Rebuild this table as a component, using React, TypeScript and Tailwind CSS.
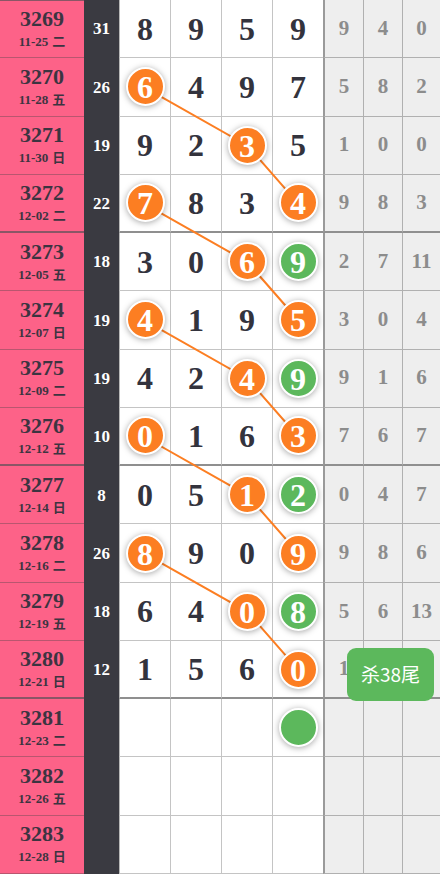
import React from 'react'

type Row = {
  issue: string
  date: string
  week: string
  sum?: string
  digits: string[]
  tails: string[]
  hot?: Record<number, 'o' | 'g'>
}

const rows: Row[] = [
  { issue: '3269', date: '11-25', week: '二', sum: '31', digits: ['8', '9', '5', '9'], tails: ['9', '4', '0'] },
  { issue: '3270', date: '11-28', week: '五', sum: '26', digits: ['6', '4', '9', '7'], tails: ['5', '8', '2'], hot: { 0: 'o' } },
  { issue: '3271', date: '11-30', week: '日', sum: '19', digits: ['9', '2', '3', '5'], tails: ['1', '0', '0'], hot: { 2: 'o' } },
  { issue: '3272', date: '12-02', week: '二', sum: '22', digits: ['7', '8', '3', '4'], tails: ['9', '8', '3'], hot: { 0: 'o', 3: 'o' } },
  { issue: '3273', date: '12-05', week: '五', sum: '18', digits: ['3', '0', '6', '9'], tails: ['2', '7', '11'], hot: { 2: 'o', 3: 'g' } },
  { issue: '3274', date: '12-07', week: '日', sum: '19', digits: ['4', '1', '9', '5'], tails: ['3', '0', '4'], hot: { 0: 'o', 3: 'o' } },
  { issue: '3275', date: '12-09', week: '二', sum: '19', digits: ['4', '2', '4', '9'], tails: ['9', '1', '6'], hot: { 2: 'o', 3: 'g' } },
  { issue: '3276', date: '12-12', week: '五', sum: '10', digits: ['0', '1', '6', '3'], tails: ['7', '6', '7'], hot: { 0: 'o', 3: 'o' } },
  { issue: '3277', date: '12-14', week: '日', sum: '8', digits: ['0', '5', '1', '2'], tails: ['0', '4', '7'], hot: { 2: 'o', 3: 'g' } },
  { issue: '3278', date: '12-16', week: '二', sum: '26', digits: ['8', '9', '0', '9'], tails: ['9', '8', '6'], hot: { 0: 'o', 3: 'o' } },
  { issue: '3279', date: '12-19', week: '五', sum: '18', digits: ['6', '4', '0', '8'], tails: ['5', '6', '13'], hot: { 2: 'o', 3: 'g' } },
  { issue: '3280', date: '12-21', week: '日', sum: '12', digits: ['1', '5', '6', '0'], tails: ['1', '', ''], hot: { 3: 'o' } },
  { issue: '3281', date: '12-23', week: '二', digits: ['', '', '', ''], tails: ['', '', ''], hot: { 3: 'g' } },
  { issue: '3282', date: '12-26', week: '五', digits: ['', '', '', ''], tails: ['', '', ''] },
  { issue: '3283', date: '12-28', week: '日', digits: ['', '', '', ''], tails: ['', '', ''] },
]

const RH = 874 / 15
const colX = [144.5, 196, 247.5, 298.5]
// orange trail: [row, col]
const trails: [number, number][][] = [
  [[1, 0], [2, 2], [3, 3]],
  [[3, 0], [4, 2], [5, 3]],
  [[5, 0], [6, 2], [7, 3]],
  [[7, 0], [8, 2], [9, 3]],
  [[9, 0], [10, 2], [11, 3]],
]

const serif = "font-['Liberation_Serif','Times_New_Roman','Noto_Sans_CJK_SC',serif]"
const tailW = ['w-[40px]', 'w-[39px]', 'w-[38px]']

function Ball({ kind, n }: { kind: 'o' | 'g'; n: string }) {
  return (
    <div
      className={`relative z-20 w-[39px] h-[39px] rounded-full border-2 border-white flex items-center justify-center text-white font-bold text-[32px] leading-none shadow-[0_1px_6px_rgba(0,0,0,0.35)] ${
        kind === 'o' ? 'bg-[#fc7e22]' : 'bg-[#5cb85c]'
      }`}
    >
      <span className="mt-[1px]">{n}</span>
    </div>
  )
}

export default function App() {
  return (
    <div className={`relative w-[440px] h-[874px] overflow-hidden bg-white ${serif}`}>
      <div className="flex flex-col h-full">
        {rows.map((r, i) => {
          const thick = i === 3 || i === 7 || i === 11
          const bb = thick ? 'border-b-2 border-[#8f8f8f]' : 'border-b border-[#c4c4c4]'
          return (
            <div key={r.issue} className="flex h-[58.27px] shrink-0">
              {/* issue / date */}
              <div
                className={`w-[84px] flex flex-col items-center justify-center bg-[#fd6288] text-[#3c3441] ${
                  thick ? 'border-b-2 border-[#8a5666]' : 'border-b border-[#b9566f]'
                } ${i === 0 ? 'border-t border-t-[#8a5666]' : ''}`}
              >
                <div className="text-[22px] font-bold leading-[22px]">{r.issue}</div>
                <div className="text-[13px] font-bold leading-[16px] mt-[4px] flex items-center gap-[4px]">
                  <span>{r.date}</span>
                  <span>{r.week}</span>
                </div>
              </div>
              {/* sum */}
              <div className="w-[35px] flex items-center justify-center bg-[#3a3a41] text-white font-bold text-[17px]">
                {r.sum}
              </div>
              {/* digits */}
              {r.digits.map((d, c) => {
                const hot = r.hot?.[c]
                return (
                  <div
                    key={c}
                    className={`w-[51px] flex items-center justify-center text-[#33333d] font-bold text-[32px] ${bb} ${
                      c === 0 ? 'border-l border-l-[#b8b8b8]' : 'border-l border-l-[#c4c4c4]'
                    }`}
                  >
                    {hot ? <Ball kind={hot} n={d} /> : d}
                  </div>
                )
              })}
              {/* tails */}
              {r.tails.map((t, c) => (
                <div
                  key={c}
                  className={`${tailW[c]} flex items-center justify-center bg-[#eeeeee] text-[#8c8c8c] font-bold text-[21px] ${
                    thick ? 'border-b-2 border-b-[#8f8f8f]' : 'border-b border-b-[#b0b0b0]'
                  } ${c === 0 ? 'border-l-2 border-l-[#9a9a9a]' : 'border-l border-l-[#b0b0b0]'}`}
                >
                  {t}
                </div>
              ))}
            </div>
          )
        })}
      </div>

      <svg className="absolute inset-0 z-10 pointer-events-none" width={440} height={874} viewBox="0 0 440 874">
        {trails.map((t, k) => (
          <polyline
            key={k}
            points={t.map(([r, c]) => `${colX[c]},${r * RH + RH / 2}`).join(' ')}
            fill="none"
            stroke="#fc7e22"
            strokeWidth={2}
          />
        ))}
      </svg>

      <div className="absolute left-[347px] top-[648px] z-30 w-[87px] h-[53px] rounded-[9px] bg-[#5cb85c] flex items-center justify-center text-white text-[19px] font-['Noto_Sans_CJK_SC','Noto_Sans',sans-serif]">
        杀38尾
      </div>
    </div>
  )
}
